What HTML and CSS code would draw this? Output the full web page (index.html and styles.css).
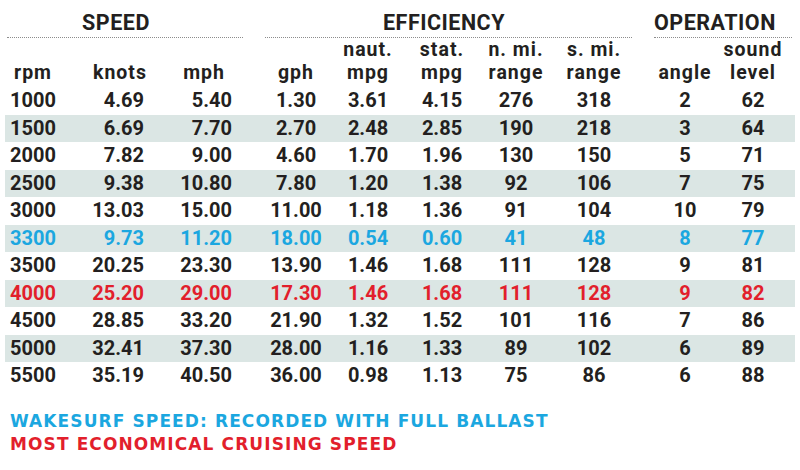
FILE: index.html
```html
<!DOCTYPE html>
<html lang="en">
<head>
<meta charset="utf-8">
<title>Performance data</title>
<link rel="stylesheet" href="styles.css">
</head>
<body>
<div class="sheet">
  <div class="groups">
    <div class="group g-speed"><span>SPEED</span></div>
    <div class="group g-eff"><span>EFFICIENCY</span></div>
    <div class="group g-op"><span>OPERATION</span></div>
  </div>

  <div class="row head">
    <div class="c c1">rpm</div>
    <div class="c c2">knots</div>
    <div class="c c3">mph</div>
    <div class="c c4">gph</div>
    <div class="c c5">naut.<br>mpg</div>
    <div class="c c6">stat.<br>mpg</div>
    <div class="c c7">n. mi.<br>range</div>
    <div class="c c8">s. mi.<br>range</div>
    <div class="c c9">angle</div>
    <div class="c c10">sound<br>level</div>
  </div>

  <div class="row"><div class="c c1">1000</div><div class="c c2">4.69</div><div class="c c3">5.40</div><div class="c c4">1.30</div><div class="c c5">3.61</div><div class="c c6">4.15</div><div class="c c7">276</div><div class="c c8">318</div><div class="c c9">2</div><div class="c c10">62</div></div>
  <div class="row band"><div class="c c1">1500</div><div class="c c2">6.69</div><div class="c c3">7.70</div><div class="c c4">2.70</div><div class="c c5">2.48</div><div class="c c6">2.85</div><div class="c c7">190</div><div class="c c8">218</div><div class="c c9">3</div><div class="c c10">64</div></div>
  <div class="row"><div class="c c1">2000</div><div class="c c2">7.82</div><div class="c c3">9.00</div><div class="c c4">4.60</div><div class="c c5">1.70</div><div class="c c6">1.96</div><div class="c c7">130</div><div class="c c8">150</div><div class="c c9">5</div><div class="c c10">71</div></div>
  <div class="row band"><div class="c c1">2500</div><div class="c c2">9.38</div><div class="c c3">10.80</div><div class="c c4">7.80</div><div class="c c5">1.20</div><div class="c c6">1.38</div><div class="c c7">92</div><div class="c c8">106</div><div class="c c9">7</div><div class="c c10">75</div></div>
  <div class="row"><div class="c c1">3000</div><div class="c c2">13.03</div><div class="c c3">15.00</div><div class="c c4">11.00</div><div class="c c5">1.18</div><div class="c c6">1.36</div><div class="c c7">91</div><div class="c c8">104</div><div class="c c9">10</div><div class="c c10">79</div></div>
  <div class="row band blue"><div class="c c1">3300</div><div class="c c2">9.73</div><div class="c c3">11.20</div><div class="c c4">18.00</div><div class="c c5">0.54</div><div class="c c6">0.60</div><div class="c c7">41</div><div class="c c8">48</div><div class="c c9">8</div><div class="c c10">77</div></div>
  <div class="row"><div class="c c1">3500</div><div class="c c2">20.25</div><div class="c c3">23.30</div><div class="c c4">13.90</div><div class="c c5">1.46</div><div class="c c6">1.68</div><div class="c c7">111</div><div class="c c8">128</div><div class="c c9">9</div><div class="c c10">81</div></div>
  <div class="row band red"><div class="c c1">4000</div><div class="c c2">25.20</div><div class="c c3">29.00</div><div class="c c4">17.30</div><div class="c c5">1.46</div><div class="c c6">1.68</div><div class="c c7">111</div><div class="c c8">128</div><div class="c c9">9</div><div class="c c10">82</div></div>
  <div class="row"><div class="c c1">4500</div><div class="c c2">28.85</div><div class="c c3">33.20</div><div class="c c4">21.90</div><div class="c c5">1.32</div><div class="c c6">1.52</div><div class="c c7">101</div><div class="c c8">116</div><div class="c c9">7</div><div class="c c10">86</div></div>
  <div class="row band"><div class="c c1">5000</div><div class="c c2">32.41</div><div class="c c3">37.30</div><div class="c c4">28.00</div><div class="c c5">1.16</div><div class="c c6">1.33</div><div class="c c7">89</div><div class="c c8">102</div><div class="c c9">6</div><div class="c c10">89</div></div>
  <div class="row"><div class="c c1">5500</div><div class="c c2">35.19</div><div class="c c3">40.50</div><div class="c c4">36.00</div><div class="c c5">0.98</div><div class="c c6">1.13</div><div class="c c7">75</div><div class="c c8">86</div><div class="c c9">6</div><div class="c c10">88</div></div>

  <div class="notes">
    <p class="note note-blue">WAKESURF SPEED: RECORDED WITH FULL BALLAST</p>
    <p class="note note-red">MOST ECONOMICAL CRUISING SPEED</p>
  </div>
</div>
</body>
</html>
```

FILE: styles.css
```css
* { box-sizing: border-box; }
html, body { margin: 0; padding: 0; background: #ffffff; }
body {
  width: 800px;
  height: 470px;
  overflow: hidden;
  font-family: Roboto, "Liberation Sans", sans-serif;
  font-weight: 700;
  color: #231f20;
}
.sheet { padding-top: 11px; }

.groups {
  display: grid;
  grid-template-columns: 236px 367px 138px;
  column-gap: 22px;
  padding-left: 7px;
}
.group {
  font-size: 21.5px;
  letter-spacing: 0.5px;
  line-height: 24px;
  padding-bottom: 2px;
  border-bottom: 1px dotted #8c8c8c;
  text-align: center;
}
.g-speed { padding-right: 18px; }
.g-eff { padding-right: 9px; }
.g-op { text-align: left; }

.row {
  display: grid;
  grid-template-columns: 61px 84px 90px 92px 72px 76px 72px 84px 79px 80px;
  margin-left: 5px;
  width: 790px;
  height: 27.5px;
  font-size: 20px;
  line-height: 27.5px;
  white-space: nowrap;
}
.row.band { background: #dbe6e4; }
.row.blue { color: #1ba7e0; }
.row.red { color: #e21f2c; }

.row.head {
  height: auto;
  font-size: 19.5px;
  letter-spacing: 1px;
  line-height: 23px;
  padding-top: 0;
  margin-bottom: 3px;
  align-items: end;
}

.c { text-align: center; }
.c1 { padding-right: 5px; }
.c2 { text-align: right; padding-right: 6px; }
.c3 { text-align: right; padding-right: 8px; }
.c4 { padding-left: 20px; }
.c9 { padding-left: 19px; }
.c10 { padding-right: 4px; }
.head .c2 { padding-right: 3px; }
.head .c3 { padding-right: 15px; }

.notes { padding-left: 10px; margin-top: 20.7px; }
.note {
  margin: 0;
  font-family: "DejaVu Sans", Roboto, sans-serif;
  font-size: 17px;
  letter-spacing: 1.1px;
  line-height: 23px;
}
.note-blue { color: #1ba7e0; }
.note-red { color: #e21f2c; }
```
